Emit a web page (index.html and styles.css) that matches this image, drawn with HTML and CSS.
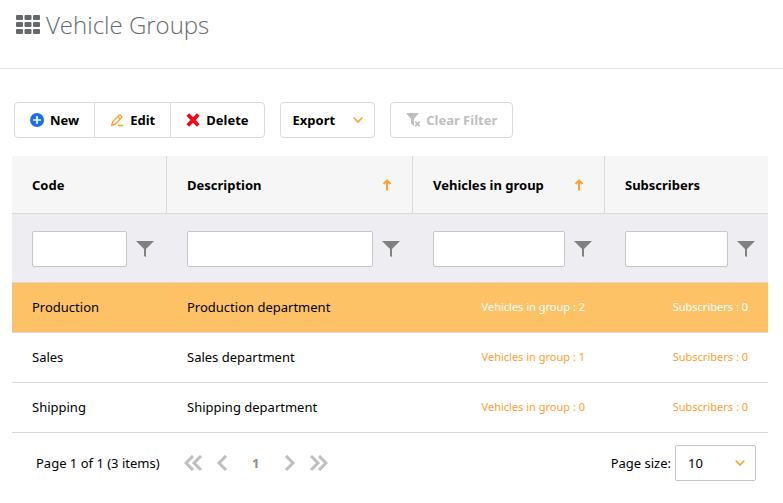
FILE: index.html
```html
<!DOCTYPE html>
<html lang="en">
<head>
    <meta charset="UTF-8">
    <meta name="viewport" content="width=device-width, initial-scale=1.0">
    <title>Vehicle Groups</title>
    <link rel="stylesheet" href="styles.css">
</head>
<body>

    <!-- Shared icons -->
    <svg class="icon-defs" aria-hidden="true">
        <symbol id="icon-funnel" viewBox="0 0 18 18">
            <path d="M0 1h18L10 9v8l-2-1V9z"/>
        </symbol>
        <symbol id="icon-up" viewBox="0 0 10 12">
            <path d="M5 11.500V2M1.500 5L5 1.500L8.500 5" fill="none" stroke="currentColor" stroke-width="2"/>
        </symbol>
        <symbol id="icon-down" viewBox="0 0 10 8">
            <path d="M.7 1.500L5 6L9.300 1.500" fill="none" stroke="currentColor" stroke-width="1.600"/>
        </symbol>
    </svg>

    <header>
        <svg class="grid-icon" viewBox="0 0 24 19" aria-hidden="true">
            <rect x="0" y="0" width="7" height="5" rx="1"/>
            <rect x="8.500" y="0" width="7" height="5" rx="1"/>
            <rect x="17" y="0" width="7" height="5" rx="1"/>
            <rect x="0" y="7" width="7" height="5" rx="1"/>
            <rect x="8.500" y="7" width="7" height="5" rx="1"/>
            <rect x="17" y="7" width="7" height="5" rx="1"/>
            <rect x="0" y="14" width="7" height="5" rx="1"/>
            <rect x="8.500" y="14" width="7" height="5" rx="1"/>
            <rect x="17" y="14" width="7" height="5" rx="1"/>
        </svg>
        <h1>Vehicle Groups</h1>
    </header>

    <main>
        <div class="toolbar">
            <div class="button-group">
                <button type="button">
                    <svg class="button-icon" viewBox="0 0 14 14" aria-hidden="true">
                        <circle cx="7" cy="7" r="7" fill="#1a6fee"/>
                        <path d="M7 3v8M3 7h8" stroke="#fff" stroke-width="1.600"/>
                    </svg>
                    New
                </button>
                <button type="button">
                    <svg class="button-icon" viewBox="0 0 14 14" aria-hidden="true">
                        <path d="M1.700 12.300l.9-3.500L9 2.300q.8-.8 1.600 0l.8.8q.8.8 0 1.600L5.200 11.300zM7.800 3.600l2.300 2.300M8 12.500h5" fill="none" stroke="#ffa02f" stroke-width="1.300"/>
                    </svg>
                    Edit
                </button>
                <button type="button">
                    <svg class="button-icon" viewBox="0 0 14 14" aria-hidden="true">
                        <path d="M1.800 1.500L12.200 12.500M12.200 1.500L1.800 12.500" stroke="#fb0510" stroke-width="3.800"/>
                    </svg>
                    Delete
                </button>
            </div>
            <button type="button" class="export">
                Export
                <svg class="chevron" aria-hidden="true"><use href="#icon-down"/></svg>
            </button>
            <button type="button" disabled>
                <svg class="button-icon" viewBox="0 0 14 14" aria-hidden="true">
                    <path d="M0 0h13L8 6v7L5 10.500V6z" fill="#bfbfbf"/>
                    <path d="M9 8.500l4.700 4.700M13.700 8.500l-4.700 4.700" stroke="#fff" stroke-width="3"/>
                    <path d="M9.200 8.600l4.500 4.500M13.700 8.600l-4.500 4.500" stroke="#bfbfbf" stroke-width="1.600"/>
                </svg>
                Clear Filter
            </button>
        </div>

        <table>
            <colgroup>
                <col class="col-code">
                <col>
                <col class="col-vehicles">
                <col class="col-subscribers">
            </colgroup>
            <thead>
                <tr>
                    <th scope="col">Code</th>
                    <th scope="col">
                        <div class="sortable">Description <svg class="sort-icon" aria-hidden="true"><use href="#icon-up"/></svg></div>
                    </th>
                    <th scope="col">
                        <div class="sortable">Vehicles in group <svg class="sort-icon" aria-hidden="true"><use href="#icon-up"/></svg></div>
                    </th>
                    <th scope="col">Subscribers</th>
                </tr>
                <tr class="filter-row">
                    <td>
                        <div class="filter">
                            <input type="text" aria-label="Filter by code">
                            <button type="button" aria-label="Code filter options"><svg><use href="#icon-funnel"/></svg></button>
                        </div>
                    </td>
                    <td>
                        <div class="filter">
                            <input type="text" aria-label="Filter by description">
                            <button type="button" aria-label="Description filter options"><svg><use href="#icon-funnel"/></svg></button>
                        </div>
                    </td>
                    <td>
                        <div class="filter">
                            <input type="text" aria-label="Filter by vehicles in group">
                            <button type="button" aria-label="Vehicles filter options"><svg><use href="#icon-funnel"/></svg></button>
                        </div>
                    </td>
                    <td>
                        <div class="filter">
                            <input type="text" aria-label="Filter by subscribers">
                            <button type="button" aria-label="Subscribers filter options"><svg><use href="#icon-funnel"/></svg></button>
                        </div>
                    </td>
                </tr>
            </thead>
            <tbody>
                <tr class="selected">
                    <td>Production</td>
                    <td>Production department</td>
                    <td class="link-cell"><a href="#">Vehicles in group : 2</a></td>
                    <td class="link-cell"><a href="#">Subscribers : 0</a></td>
                </tr>
                <tr>
                    <td>Sales</td>
                    <td>Sales department</td>
                    <td class="link-cell"><a href="#">Vehicles in group : 1</a></td>
                    <td class="link-cell"><a href="#">Subscribers : 0</a></td>
                </tr>
                <tr>
                    <td>Shipping</td>
                    <td>Shipping department</td>
                    <td class="link-cell"><a href="#">Vehicles in group : 0</a></td>
                    <td class="link-cell"><a href="#">Subscribers : 0</a></td>
                </tr>
            </tbody>
        </table>

        <div class="pager">
            <span class="summary">Page 1 of 1 (3 items)</span>
            <nav aria-label="Pages">
                <button type="button" aria-label="First page">
                    <svg viewBox="0 0 18 16"><path d="M9 1L2 8l7 7M17 1l-7 7l7 7"/></svg>
                </button>
                <button type="button" aria-label="Previous page">
                    <svg viewBox="0 0 18 16"><path d="M13 1L6 8l7 7"/></svg>
                </button>
                <span class="current">1</span>
                <button type="button" aria-label="Next page">
                    <svg viewBox="0 0 18 16"><path d="M5 1l7 7l-7 7"/></svg>
                </button>
                <button type="button" aria-label="Last page">
                    <svg viewBox="0 0 18 16"><path d="M1 1l7 7l-7 7M9 1l7 7l-7 7"/></svg>
                </button>
            </nav>
            <label for="pageSize">Page size:</label>
            <div class="page-size">
                <select id="pageSize">
                    <option>10</option>
                    <option>20</option>
                    <option>50</option>
                </select>
                <svg class="chevron" aria-hidden="true"><use href="#icon-down"/></svg>
            </div>
        </div>
    </main>

</body>
</html>
```
FILE: styles.css
```css
* {
    box-sizing: border-box;
}

body {
    font-family: 'Noto Sans', 'Open Sans', sans-serif;
    font-size: 13px;
    line-height: 20px;
    margin: 0;
    background-color: #fff;
    color: #000;
}

svg {
    display: block;
    flex-shrink: 0;
}

.icon-defs {
    position: absolute;
    width: 0;
    height: 0;
}

header {
    display: flex;
    align-items: center;
    gap: 6px;
    height: 69px;
    padding: 0 16px 19px;
    border-bottom: 1px solid #e2e6ea;
    color: #65696c;
}

.grid-icon {
    width: 24px;
    height: 19px;
    fill: currentColor;
}

h1 {
    margin: 0;
    font-family: 'Open Sans', sans-serif;
    font-size: 24px;
    font-weight: 300;
    line-height: 32px;
}

main {
    padding: 33px 15px 20px 12px;
}

button,
input,
select {
    font: inherit;
    color: inherit;
}

button {
    cursor: pointer;
}

.toolbar {
    display: flex;
    gap: 15px;
    padding-left: 2px;
    margin-bottom: 18px;
}

.toolbar button {
    display: flex;
    align-items: center;
    gap: 6px;
    height: 36px;
    padding: 0 15px;
    background-color: #fff;
    border: 1px solid #dadada;
    border-radius: 4px;
    font-weight: 700;
    white-space: nowrap;
}

.toolbar button:disabled {
    color: #bfbfbf;
    cursor: default;
}

.button-group {
    display: flex;
}

.button-group button + button {
    margin-left: -1px;
}

.button-group button:not(:last-child) {
    border-top-right-radius: 0;
    border-bottom-right-radius: 0;
}

.button-group button:not(:first-child) {
    border-top-left-radius: 0;
    border-bottom-left-radius: 0;
}

.toolbar .export {
    gap: 18px;
    padding: 0 11px 0 12px;
}

.button-icon {
    width: 14px;
    height: 14px;
}

.chevron {
    width: 10px;
    height: 8px;
    color: #ffa02f;
}

table {
    width: 100%;
    table-layout: fixed;
    border-collapse: separate;
    border-spacing: 0;
}

.col-code {
    width: 155px;
}

.col-vehicles {
    width: 192px;
}

.col-subscribers {
    width: 163px;
}

th,
td {
    height: 50px;
    padding: 0 20px 1px;
    border-bottom: 1px solid #dadada;
    text-align: left;
    white-space: nowrap;
}

th {
    height: 58px;
    padding-bottom: 0;
    background-color: #f6f6f6;
    border-right: 1px solid #dadada;
    font-weight: 700;
}

th:last-child {
    border-right: none;
}

.sortable {
    display: flex;
    align-items: center;
    justify-content: space-between;
}

.sort-icon {
    width: 10px;
    height: 12px;
    color: #ffa02f;
}

.filter-row td {
    height: 69px;
    padding: 1px 13px 0 20px;
    background-color: #eeedf2;
}

.filter {
    display: flex;
    align-items: center;
    gap: 9px;
}

.filter input {
    flex: 1;
    min-width: 0;
    height: 36px;
    padding: 0 8px;
    background-color: #fff;
    border: 1px solid #c6c6cb;
    border-radius: 2px;
}

.filter button {
    padding: 0;
    background: none;
    border: none;
}

.filter svg {
    width: 18px;
    height: 18px;
    fill: #808080;
}

.link-cell {
    font-size: 11px;
    text-align: right;
}

.link-cell a {
    color: #ffa02f;
    text-decoration: none;
}

.selected td {
    background-color: #fec266;
}

.selected a {
    color: #fff;
}

.pager {
    display: flex;
    align-items: center;
    padding: 12px 12px 0 24px;
}

.pager nav {
    display: flex;
    align-items: center;
    gap: 11px;
    margin: 0 auto 0 24px;
}

.pager nav button {
    padding: 0;
    background: none;
    border: none;
}

.pager nav svg {
    width: 18px;
    height: 16px;
    fill: none;
    stroke: #bfbfbf;
    stroke-width: 3;
}

.current {
    width: 28px;
    color: #8c8c8c;
    font-weight: 700;
    text-align: center;
}

.page-size {
    position: relative;
    margin-left: 4px;
}

.page-size select {
    display: block;
    width: 81px;
    height: 36px;
    padding: 0 12px;
    appearance: none;
    background-color: #fff;
    border: 1px solid #c6c6c6;
    border-radius: 2px;
}

.page-size .chevron {
    position: absolute;
    top: 14px;
    right: 11px;
    pointer-events: none;
}
```
